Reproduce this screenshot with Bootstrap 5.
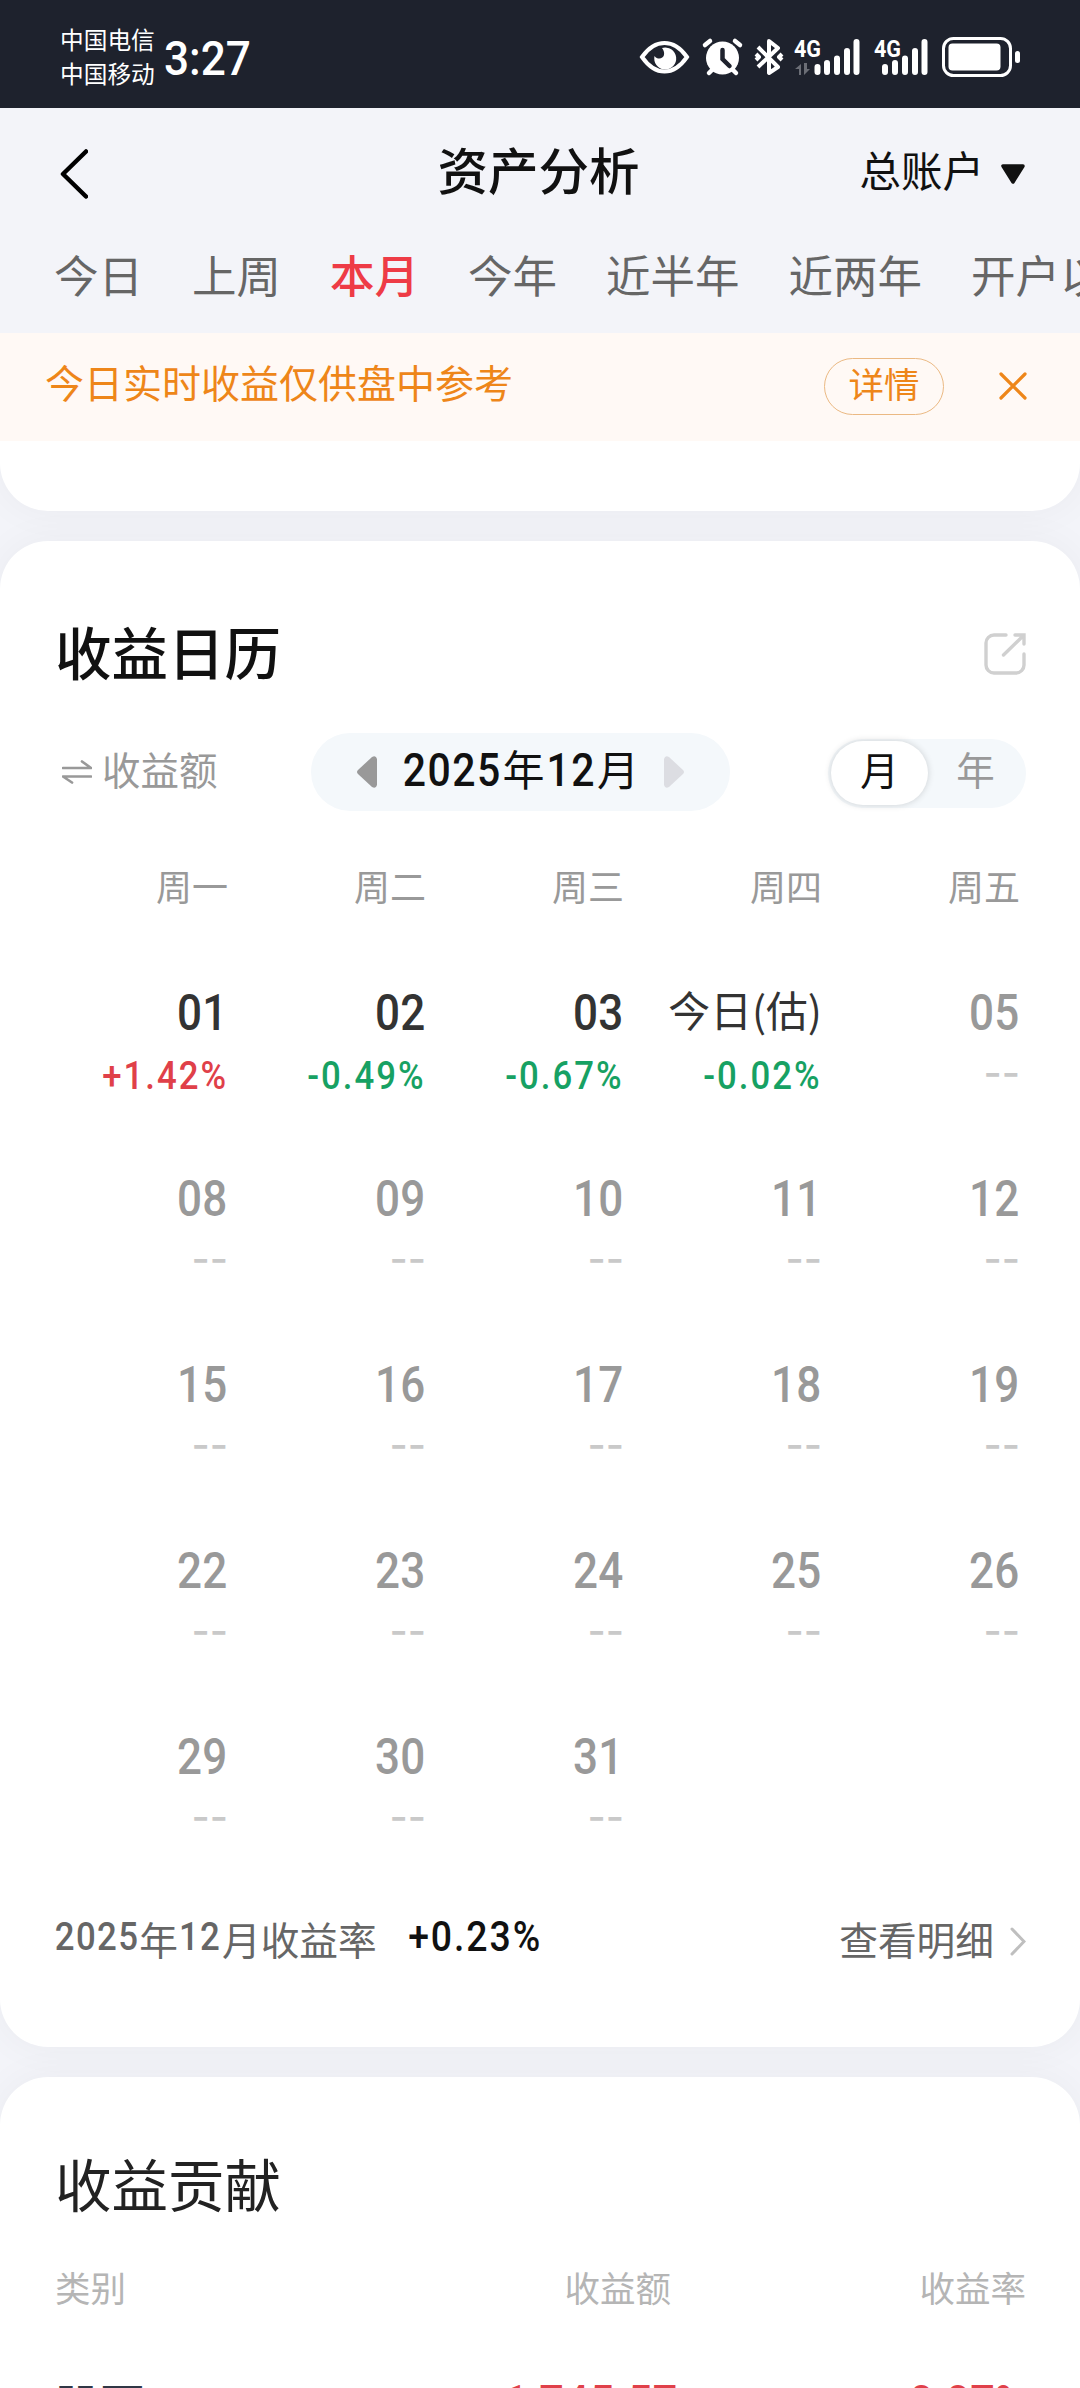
<!DOCTYPE html>
<html lang="zh-CN">
<head>
<meta charset="utf-8">
<meta name="viewport" content="width=device-width, initial-scale=1">
<title>资产分析</title>
<link rel="stylesheet" href="https://cdn.jsdelivr.net/npm/bootstrap@5.3.0/dist/css/bootstrap.min.css">
<style>
  body{font-family:"Noto Sans CJK SC",sans-serif;background:#f3f4f9;color:#111;width:1080px;height:2388px;overflow:hidden;line-height:1}
  svg{display:block;flex:none}
  .statusbar{height:108px;background:#1e222d;color:#fff;padding:0 59px 0 60px}
  .carrier{font-size:23.7px;line-height:34px;padding-top:4px}
  .clock{font:500 48px/1 Roboto,sans-serif;margin-left:9px;padding-top:9px;transform:scaleX(.92);transform-origin:left}
  .sysicons{margin-top:6px}
  .sig{font:700 23px Roboto,sans-serif;fill:#fff}
  .titlebar{height:132px;padding:0 55px 0 60px}
  .titlebar .ttl{font-size:50.5px;font-weight:500;padding:0 8px 11px 0}
  .side{width:165px}
  .acct{font-size:41.5px;gap:17px}
  .acct span{padding-bottom:8px}
  .periods{height:93px;padding:0 0 24px 54px;gap:49px;font-size:44.5px;color:#666;overflow:hidden}
  .periods .active{color:#ee3b46;font-weight:500}
  .tip{height:108px;background:#fff9f5;color:#ee8619;font-size:39px;padding:0 53px 2px 45px}
  .tip .msg{padding-bottom:9px}
  .tip .more{width:120px;height:57px;border:1.5px solid #ebb983;border-radius:29px;font-size:35.5px;padding-bottom:7px}
  .panel{background:#fff;border-radius:48px;box-shadow:0 0 40px rgba(20,25,35,.045)}
  .panel-prev{height:70px;border-radius:0 0 48px 48px;margin-bottom:30px;clip-path:inset(0 0 -30px 0)}
  .panel-cal{height:1506px;margin-bottom:30px;padding-top:84px}
  .panel-con{height:400px;padding-top:77px}
  .h-row{height:57px;font-size:56.5px;font-weight:500;padding:0 54px 0 55px}
  .h-row span{padding-bottom:6px}
  .tools{height:78px;margin-top:51px;padding:0 54px 0 62px}
  .metric{font-size:38.5px;color:#999;gap:10px;width:249px}
  .metric span{padding-bottom:7px}
  .monthpill{width:419px;height:78px;border-radius:39px;background:#f4f8fb;font-size:42px;padding:0 46px}
  .monthtext{padding-bottom:8px}
  .monthtext .num{font-size:46.5px;letter-spacing:1.7px;padding-top:4px}
  .num{font-family:Roboto,sans-serif;font-weight:500;display:inline-block;transform:scaleX(.88)}
  .y4{margin:0 -6px}.m2{margin:0 -2px}
  .seg{width:198px;height:69px;border-radius:35px;background:#f4f8fb;padding:3px;font-size:38.5px;color:#999;margin:2px 0 0 98px}
  .seg>div{padding-bottom:9px}
  .seg .on{width:97px;height:64px;border-radius:32px;background:#fff;color:#111;box-shadow:0 0 7px rgba(0,0,0,.16)}
  .week{padding:0 60px 0 30px}
  .week>div{width:198px;text-align:right}
  .wk{font-size:36px;color:#999;height:36px;margin-top:56px}
  #cal{padding-top:80px}
  .days{height:186px}
  .days .d{font-size:50px;height:50px;line-height:50px;color:#999;letter-spacing:.4px}
  .days .num{transform-origin:right}
  .days .d.past{color:#333}
  .days .today{font-size:41.8px;height:50px;line-height:52px;color:#333;white-space:nowrap}
  .days .p{font-size:39.5px;height:40px;line-height:40px;margin-top:19px;letter-spacing:2.3px;margin-right:0}
  .up{color:#e04049}.down{color:#17a163}
  .none{font-family:Inter,sans-serif;font-size:39.5px;font-weight:500;height:40px;line-height:40px;margin-top:20px;color:#c9c9c9}
  .sum{font-size:38.7px;color:#666;padding:0 54px 0 55px;height:40px;margin-top:8px}
  .sum>span{padding-bottom:5px}
  .sum .num{font-size:39.5px;letter-spacing:1.6px;padding-bottom:3px}
  .sum .num.val{font-size:42.5px;letter-spacing:2.2px;color:#111;margin-left:22px;padding-bottom:8px}
  .cols,.rowline{padding:0 54px 0 55px}
  .cols{font-size:35.5px;color:#b5b5b5;margin-top:58px}
  .c1{width:300px}.c2{width:316px}
  .rowline{margin-top:72px;font-size:45px;color:#303745;font-weight:500}
  .rowline .c1{padding-top:4px}
  .rowline .num{font-size:49px;line-height:1;padding-top:1px;transform-origin:right;color:#e04049}
  .rowline .c2 .num{margin-right:-7px;letter-spacing:.8px}
</style>
</head>
<body>
<header>
  <div class="statusbar d-flex align-items-center justify-content-between">
    <div class="d-flex align-items-center">
      <div class="carrier"><div>中国电信</div><div>中国移动</div></div>
      <div class="clock">3:27</div>
    </div>
    <svg width="382" height="44" viewBox="640 35 382 44" class="sysicons">
      <path d="M643 57C650 47 658 43 665.500 43S681 47 688 57C681 67 673 71.500 665.500 71.500S650 67 643 57Z" fill="none" stroke="#fff" stroke-width="4"/>
      <path d="M663 48a11 11 0 1 1-7.500 8c3 4 8.500 3 9.500-1 .5-3-.5-5-2-7z" fill="#fff"/>
      <g stroke="#fff" stroke-linecap="round"><circle cx="723.500" cy="58" r="16.500" fill="#fff" stroke="none"/><path d="M706 45l5-4M741 45l-5-4M710 73l4-4M737 73l-4-4" stroke-width="4.500"/><path d="M723.500 50v9l7 7" fill="none" stroke="#1e222d" stroke-width="4.500"/></g>
      <path d="M759 47l20 20-9 6V41l9 7-20 19M757 54l3 3-3 3M783 54l-3 3 3 3" fill="none" stroke="#fff" stroke-width="4" stroke-linejoin="round"/>
      <text class="sig" x="795" y="57" textLength="27" lengthAdjust="spacingAndGlyphs">4G</text>
      <path d="M802 75V64l-6 5h4v6zM805 63v12l6-6h-3v-6z" fill="#6b6e76"/>
      <g stroke="#fff" stroke-width="6" stroke-linecap="round"><path d="M818.500 67v5M828 63v9M838 58.500v13.500M848 51v21M857.500 42v30"/><path d="M886 67v5M896 63v9M906 58.500v13.500M916 51v21M925.500 42v30"/></g>
      <text class="sig" x="875" y="57" textLength="27" lengthAdjust="spacingAndGlyphs" stroke="#1e222d" stroke-width="3" paint-order="stroke">4G</text>
      <rect x="944.500" y="38.500" width="67" height="37" rx="10" fill="none" stroke="#fff" stroke-width="3"/><rect x="949.500" y="43.500" width="52" height="27" rx="4" fill="#fff"/><rect x="1016" y="51" width="5" height="12" rx="2.500" fill="#fff"/>
    </svg>
  </div>
  <div class="titlebar d-flex align-items-center justify-content-between">
    <div class="side"><svg width="28" height="50" viewBox="0 0 28 50"><path d="M26 2.500L3 25l23 22.500" fill="none" stroke="#000" stroke-width="4.500" stroke-linecap="round" stroke-linejoin="round"/></svg></div>
    <div class="ttl">资产分析</div>
    <div class="side acct d-flex align-items-center justify-content-end text-nowrap"><span>总账户</span><svg width="24" height="20" viewBox="0 0 24 20"><path d="M2 2h20L12 18z" fill="#111" stroke="#111" stroke-width="3.500" stroke-linejoin="round"/></svg></div>
  </div>
  <nav class="periods d-flex align-items-center text-nowrap">
    <span>今日</span><span>上周</span><span class="active">本月</span><span>今年</span><span>近半年</span><span>近两年</span><span>开户以来</span>
  </nav>
  <div class="tip d-flex align-items-center">
    <div class="msg me-auto">今日实时收益仅供盘中参考</div>
    <div class="more d-flex align-items-center justify-content-center">详情</div>
    <svg width="28" height="28" viewBox="0 0 28 28" style="margin-left:55px"><path d="M2 2l24 24M26 2L2 26" stroke="#ee8619" stroke-width="3.200" stroke-linecap="round"/></svg>
  </div>
</header>
<main>
  <section class="panel panel-prev"></section>
  <section class="panel panel-cal">
    <div class="h-row d-flex align-items-center justify-content-between">
      <span>收益日历</span>
      <svg width="42" height="42" viewBox="0 0 42 42"><path d="M22 2H10a8 8 0 0 0-8 8v22a8 8 0 0 0 8 8h22a8 8 0 0 0 8-8V21M31 2h9v9M39 3L19.500 22" fill="none" stroke="#d0d0d0" stroke-width="3.400" stroke-linecap="round"/></svg>
    </div>
    <div class="tools d-flex align-items-center">
      <div class="metric d-flex align-items-center"><svg width="30" height="24" viewBox="0 0 30 24"><path d="M1 8h28L20 1.500M29 16.500H1L10 22.500" fill="none" stroke="#999" stroke-width="2.700" stroke-linejoin="round" stroke-linecap="round"/></svg><span>收益额</span></div>
      <div class="monthpill d-flex align-items-center justify-content-between text-nowrap">
        <svg width="20" height="34" viewBox="0 0 20 34"><path d="M20 4v26q-1 4-5 2L1 19q-2-2 0-4L15 2q4-2 5 2z" fill="#999"/></svg>
        <div class="monthtext d-flex align-items-center"><span class="num y4">2025</span><span>年</span><span class="num m2">12</span><span>月</span></div>
        <svg width="20" height="34" viewBox="0 0 20 34"><path d="M0 4v26q1 4 5 2L19 19q2-2 0-4L5 2Q1 0 0 4z" fill="#dcdde2"/></svg>
      </div>
      <div class="seg d-flex align-items-center"><div class="on d-flex align-items-center justify-content-center">月</div><div class="flex-fill text-center">年</div></div>
    </div>
    <div class="week wk d-flex"><div>周一</div><div>周二</div><div>周三</div><div>周四</div><div>周五</div></div>
    <div id="cal"></div>
    <div class="sum d-flex align-items-center text-nowrap">
      <span class="d-flex align-items-center"><span class="num y4">2025</span>年<span class="num m2">12</span>月收益率</span>
      <span class="num val">+0.23%</span>
      <span class="ms-auto">查看明细</span>
      <svg width="16" height="29" viewBox="0 0 16 29" style="margin-left:16px"><path d="M2 2l12 12.500L2 27" fill="none" stroke="#bfbfbf" stroke-width="3" stroke-linecap="round"/></svg>
    </div>
  </section>
  <section class="panel panel-con">
    <div class="h-row" style="color:#222;font-weight:400">收益贡献</div>
    <div class="cols d-flex"><div class="c1">类别</div><div class="c2 text-end">收益额</div><div class="flex-fill text-end">收益率</div></div>
    <div class="rowline d-flex"><div class="c1">股票</div><div class="c2 text-end"><span class="num">+1,745.57</span></div><div class="flex-fill text-end"><span class="num">+0.07%</span></div></div>
  </section>
</main>
<script>
  const perf = {'01':'+1.42%','02':'-0.49%','03':'-0.67%','04':'-0.02%'};
  const weeks = [[1,2,3,4,5],[8,9,10,11,12],[15,16,17,18,19],[22,23,24,25,26],[29,30,31]];
  document.getElementById('cal').innerHTML = weeks.map(w => '<div class="week days d-flex">' + w.map(n => {
    const d = String(n).padStart(2,'0'), v = perf[d];
    const top = n === 4 ? '<div class="today">今日(估)</div>' : `<div class="d ${v ? 'past' : ''}"><span class="num">${d}</span></div>`;
    const low = v ? `<div class="p ${v[0] === '+' ? 'up' : 'down'}"><span class="num">${v}</span></div>` : '<div class="none">--</div>';
    return `<div>${top}${low}</div>`;
  }).join('') + '</div>').join('');
</script>
<script src="https://cdn.jsdelivr.net/npm/bootstrap@5.3.0/dist/js/bootstrap.bundle.min.js"></script>
</body>
</html>
